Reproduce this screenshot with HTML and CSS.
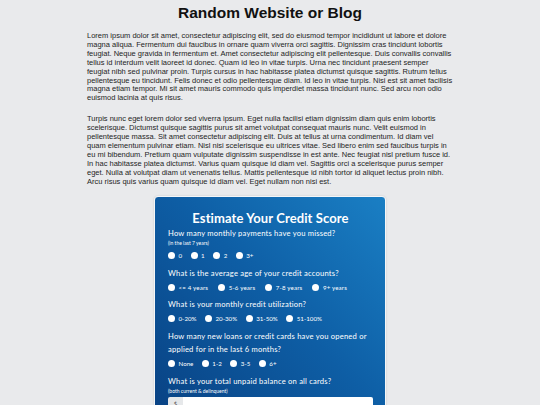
FILE: index.html
```html
<!DOCTYPE html>
<html>
<head>
<meta charset="utf-8">
<link rel="stylesheet" href="styles.css">
</head>
<body>
<div class="page">
  <h1 class="site-title">Random Website or Blog</h1>
  <p class="para">Lorem ipsum dolor sit amet, consectetur adipiscing elit, sed do eiusmod tempor incididunt ut labore et dolore magna aliqua. Fermentum dui faucibus in ornare quam viverra orci sagittis. Dignissim cras tincidunt lobortis feugiat. Neque gravida in fermentum et. Amet consectetur adipiscing elit pellentesque. Duis convallis convallis tellus id interdum velit laoreet id donec. Quam id leo in vitae turpis. Urna nec tincidunt praesent semper feugiat nibh sed pulvinar proin. Turpis cursus in hac habitasse platea dictumst quisque sagittis. Rutrum tellus pellentesque eu tincidunt. Felis donec et odio pellentesque diam. Id leo in vitae turpis. Nisi est sit amet facilisis magna etiam tempor. Mi sit amet mauris commodo quis imperdiet massa tincidunt nunc. Sed arcu non odio euismod lacinia at quis risus.</p>
  <p class="para last">Turpis nunc eget lorem dolor sed viverra ipsum. Eget nulla facilisi etiam dignissim diam quis enim lobortis scelerisque. Dictumst quisque sagittis purus sit amet volutpat consequat mauris nunc. Velit euismod in pellentesque massa. Sit amet consectetur adipiscing elit. Duis at tellus at urna condimentum. Id diam vel quam elementum pulvinar etiam. Nisl nisi scelerisque eu ultrices vitae. Sed libero enim sed faucibus turpis in eu mi bibendum. Pretium quam vulputate dignissim suspendisse in est ante. Nec feugiat nisl pretium fusce id. In hac habitasse platea dictumst. Varius quam quisque id diam vel. Sagittis orci a scelerisque purus semper eget. Nulla at volutpat diam ut venenatis tellus. Mattis pellentesque id nibh tortor id aliquet lectus proin nibh. Arcu risus quis varius quam quisque id diam vel. Eget nullam non nisi est.</p>

  <div class="card">
    <h2 class="card-title">Estimate Your Credit Score</h2>

    <div class="q">
      <div class="q-label">How many monthly payments have you missed?</div>
      <div class="q-sub">(in the last 7 years)</div>
      <div class="opts">
        <span class="opt"><span class="dot"></span>0</span>
        <span class="opt"><span class="dot"></span>1</span>
        <span class="opt"><span class="dot"></span>2</span>
        <span class="opt"><span class="dot"></span>3+</span>
      </div>
    </div>

    <div class="q">
      <div class="q-label">What is the average age of your credit accounts?</div>
      <div class="opts wide">
        <span class="opt"><span class="dot"></span>&lt;= 4 years</span>
        <span class="opt"><span class="dot"></span>5-6 years</span>
        <span class="opt"><span class="dot"></span>7-8 years</span>
        <span class="opt"><span class="dot"></span>9+ years</span>
      </div>
    </div>

    <div class="q">
      <div class="q-label">What is your monthly credit utilization?</div>
      <div class="opts">
        <span class="opt"><span class="dot"></span>0-20%</span>
        <span class="opt"><span class="dot"></span>20-30%</span>
        <span class="opt"><span class="dot"></span>31-50%</span>
        <span class="opt"><span class="dot"></span>51-100%</span>
      </div>
    </div>

    <div class="q">
      <div class="q-label">How many new loans or credit cards have you opened or applied for in the last 6 months?</div>
      <div class="opts">
        <span class="opt"><span class="dot"></span>None</span>
        <span class="opt"><span class="dot"></span>1-2</span>
        <span class="opt"><span class="dot"></span>3-5</span>
        <span class="opt"><span class="dot"></span>6+</span>
      </div>
    </div>

    <div class="q">
      <div class="q-label">What is your total unpaid balance on all cards?</div>
      <div class="q-sub tight">(both current &amp; delinquent)</div>
      <div class="input-group">
        <span class="addon">$</span>
        <span class="field"></span>
      </div>
    </div>
  </div>
</div>
</body>
</html>
```

FILE: styles.css
```css
html, body {
  margin: 0;
  padding: 0;
  background: #e9eaec;
}
body {
  font-family: "Liberation Sans", Arial, sans-serif;
  color: #111;
  overflow: hidden;
  height: 405px;
}
.page {
  width: 366px;
  margin: 0 auto;
  padding-top: 3px;
}
.site-title {
  font-size: 15.5px;
  font-weight: bold;
  text-align: center;
  margin: 0 0 9px 0;
  line-height: 20px;
}
.para {
  font-size: 7.5px;
  line-height: 8.9px;
  margin: 0 0 12px 0;
  color: #1e1e1e;
}
.para.last {
  margin-bottom: 9px;
}
.card {
  width: 205px;
  margin: 0 auto;
  padding: 13px 12px 20px 13px;
  border: 1.5px solid #f4f6f8;
  border-radius: 4px;
  background: linear-gradient(to top right, #083f80 0%, #0e5ea5 55%, #1a7fc4 100%);
  color: #fff;
  font-family: Lato, "Open Sans", sans-serif;
  box-shadow: 0 0 2px rgba(0,0,0,0.15);
}
.card-title {
  font-size: 13px;
  font-weight: 700;
  text-align: center;
  margin: 0 0 1px 0;
  line-height: 16px;
  letter-spacing: 0.1px;
}
.q {
  margin-bottom: 7.75px;
}
.q-label {
  font-size: 7.6px;
  line-height: 13.5px;
  letter-spacing: 0.2px;
}
.q-sub {
  font-size: 5px;
  line-height: 6px;
  margin-top: 0;
  margin-bottom: 6px;
}
.q-sub.tight {
  margin-bottom: 3px;
}
.opts {
  display: flex;
  gap: 8.5px;
  margin-top: 3.25px;
  align-items: center;
}
.opts.wide {
  gap: 10px;
}
.opts.wide .opt {
  letter-spacing: 0.15px;
}
.opt {
  display: flex;
  align-items: center;
  gap: 3.5px;
  font-size: 6.2px;
  line-height: 7px;
}
.dot {
  width: 7px;
  height: 7px;
  border-radius: 50%;
  background: #fff;
  flex-shrink: 0;
}
.input-group {
  display: flex;
  margin-top: 3px;
  height: 14px;
  border-radius: 2px;
  overflow: hidden;
}
.addon {
  width: 15px;
  background: #e6e8ea;
  color: #555;
  font-size: 6px;
  line-height: 14px;
  text-align: center;
}
.field {
  flex: 1;
  background: #fff;
}
```
